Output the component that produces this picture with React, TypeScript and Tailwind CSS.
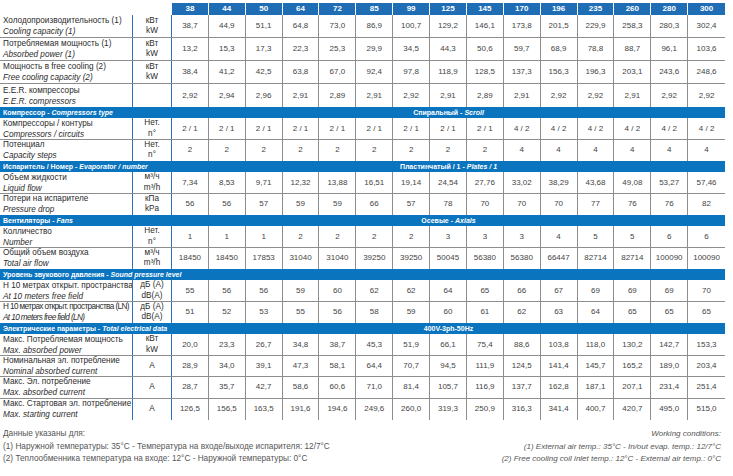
const COLS = ['38', '44', '50', '64', '72', '85', '99', '125', '145', '170', '196', '235', '260', '280', '300'];

type DataRow = {
  kind: 'row';
  ru: string;
  en: string;
  unit: [string, string] | [string] | [];
  values: string[];
  tall?: boolean;
  tight?: boolean;
};

type SectionRow = {
  kind: 'section';
  ru: string;
  en: string;
  value?: [string, string] | [string];
};

type Row = DataRow | SectionRow;

const KW: [string, string] = ['кВт', 'kW'];
const NO: [string, string] = ['Нет.', 'n°'];
const FLOW: [string, string] = ['м³/ч', 'm³/h'];
const DB: [string, string] = ['дБ (A)', 'dB(A)'];

const split = (s: string) => s.split(' ');

const ROWS: Row[] = [
  {
    kind: 'row',
    ru: 'Холодопроизводительность (1)',
    en: 'Cooling capacity (1)',
    unit: KW,
    tall: true,
    values: split('38,7 44,9 51,1 64,8 73,0 86,9 100,7 129,2 146,1 173,8 201,5 229,9 258,3 280,3 302,4'),
  },
  {
    kind: 'row',
    ru: 'Потребляемая мощность (1)',
    en: 'Absorbed power (1)',
    unit: KW,
    tall: true,
    values: split('13,2 15,3 17,3 22,3 25,3 29,9 34,5 44,3 50,6 59,7 68,9 78,8 88,7 96,1 103,6'),
  },
  {
    kind: 'row',
    ru: 'Мощность в free cooling (2)',
    en: 'Free cooling capacity (2)',
    unit: KW,
    tall: true,
    values: split('38,4 41,2 42,5 63,8 67,0 92,4 97,8 118,9 128,5 137,3 156,3 196,3 203,1 243,6 248,6'),
  },
  {
    kind: 'row',
    ru: 'E.E.R. компрессоры',
    en: 'E.E.R. compressors',
    unit: [],
    tall: true,
    values: split('2,92 2,94 2,96 2,91 2,89 2,91 2,92 2,91 2,89 2,91 2,92 2,92 2,91 2,92 2,92'),
  },
  { kind: 'section', ru: 'Компрессор', en: 'Compressors type', value: ['Спиральный', 'Scroll'] },
  {
    kind: 'row',
    ru: 'Компрессоры / контуры',
    en: 'Compressors / circuits',
    unit: NO,
    values: [...Array(9).fill('2 / 1'), ...Array(6).fill('4 / 2')],
  },
  {
    kind: 'row',
    ru: 'Потенциал',
    en: 'Capacity steps',
    unit: NO,
    values: [...Array(9).fill('2'), ...Array(6).fill('4')],
  },
  { kind: 'section', ru: 'Испаритель / Номер', en: 'Evaporator / number', value: ['Пластинчатый / 1', 'Plates / 1'] },
  {
    kind: 'row',
    ru: 'Объем жидкости',
    en: 'Liquid flow',
    unit: FLOW,
    values: split('7,34 8,53 9,71 12,32 13,88 16,51 19,14 24,54 27,76 33,02 38,29 43,68 49,08 53,27 57,46'),
  },
  {
    kind: 'row',
    ru: 'Потери на испарителе',
    en: 'Pressure drop',
    unit: ['кПа', 'kPa'],
    values: split('56 56 57 59 59 66 57 78 70 70 70 77 76 76 82'),
  },
  { kind: 'section', ru: 'Вентиляторы', en: 'Fans', value: ['Осевые', 'Axials'] },
  {
    kind: 'row',
    ru: 'Колличество',
    en: 'Number',
    unit: NO,
    values: split('1 1 1 2 2 2 2 3 3 3 4 5 5 6 6'),
  },
  {
    kind: 'row',
    ru: 'Общий объем воздуха',
    en: 'Total air flow',
    unit: FLOW,
    values: split('18450 18450 17853 31040 31040 39250 39250 50045 56380 56380 66447 82714 82714 100090 100090'),
  },
  { kind: 'section', ru: 'Уровень звукового давления', en: 'Sound pressure level' },
  {
    kind: 'row',
    ru: 'Н 10 метрах открыт. пространства',
    en: 'At 10 meters free field',
    unit: DB,
    values: split('55 56 56 59 60 62 62 64 65 66 67 69 69 69 70'),
  },
  {
    kind: 'row',
    ru: 'Н 10 метрах открыт. пространства (LN)',
    en: 'At 10 meters free field (LN)',
    unit: DB,
    tight: true,
    values: split('51 52 53 55 56 58 59 60 61 62 63 64 65 65 65'),
  },
  { kind: 'section', ru: 'Электрические параметры', en: 'Total electrical data', value: ['400V-3ph-50Hz'] },
  {
    kind: 'row',
    ru: 'Макс. Потребляемая мощность',
    en: 'Max. absorbed power',
    unit: KW,
    values: split('20,0 23,3 26,7 34,8 38,7 45,3 51,9 66,1 75,4 88,6 103,8 118,0 130,2 142,7 153,3'),
  },
  {
    kind: 'row',
    ru: 'Номинальная эл. потребление',
    en: 'Nominal absorbed current',
    unit: ['A'],
    values: split('28,9 34,0 39,1 47,3 58,1 64,4 70,7 94,5 111,9 124,5 141,4 145,7 165,2 189,0 203,4'),
  },
  {
    kind: 'row',
    ru: 'Макс. Эл. потребление',
    en: 'Max. absorbed current',
    unit: ['A'],
    values: split('28,7 35,7 42,7 58,6 60,6 71,0 81,4 105,7 116,9 137,7 162,8 187,1 207,1 231,4 251,4'),
  },
  {
    kind: 'row',
    ru: 'Макс. Стартовая эл. потребление',
    en: 'Max. starting current',
    unit: ['A'],
    values: split('126,5 156,5 163,5 191,6 194,6 249,6 260,0 319,3 250,9 316,3 341,4 400,7 420,7 495,0 515,0'),
  },
];

const GRID = 'grid grid-cols-[133px_39px_repeat(15,minmax(0,1fr))]';

function Section({ row }: { row: SectionRow }) {
  return (
    <div className={`${GRID} h-[11px] items-center bg-[#0a74bf] text-[7px] font-bold leading-none text-white`}>
      <div className="col-span-2 whitespace-nowrap pl-[3px]">
        {row.ru} - <span className="italic">{row.en}</span>
      </div>
      <div className="col-span-15 text-center whitespace-nowrap">
        {row.value && (
          <>
            {row.value[0]}
            {row.value[1] && (
              <>
                {' - '}
                <span className="italic">{row.value[1]}</span>
              </>
            )}
          </>
        )}
      </div>
    </div>
  );
}

function Line({ row, border }: { row: DataRow; border: boolean }) {
  return (
    <div
      className={`${GRID} ${row.tall ? 'h-[23px]' : 'h-[21.5px]'} ${border ? 'border-b border-[#8d8d8d]' : ''}`}
    >
      <div
        className={`flex flex-col justify-center overflow-hidden whitespace-nowrap border-r border-[#2a74bb] pl-[3px] text-[8.2px] leading-[11px] text-[#2b2b2b] ${row.tight ? 'tracking-[-0.6px]' : ''}`}
      >
        <span>{row.ru}</span>
        <span className="italic">{row.en}</span>
      </div>
      <div className="flex flex-col items-center justify-center border-r border-[#2a74bb] text-[8.2px] leading-[10.5px] text-[#2b2b2b]">
        {row.unit.map((u) => (
          <span key={u}>{u}</span>
        ))}
      </div>
      {row.values.map((v, i) => (
        <div
          key={i}
          className={`flex items-center justify-center text-[8px] text-[#444] ${i < 14 ? 'border-r border-[#8d8d8d]' : ''}`}
        >
          {v}
        </div>
      ))}
    </div>
  );
}

export default function App() {
  return (
    <div className="h-[476px] w-[733px] bg-white pt-[3px] font-['Liberation_Sans',Arial,sans-serif]">
      <div className="w-[725px]">
        {/* Model header */}
        <div className={`${GRID} h-[12px]`}>
          <div className="col-span-2" />
          {COLS.map((c, i) => (
            <div
              key={c}
              className={`flex items-center justify-center bg-[#1e6db5] text-[8px] font-bold leading-none text-white ${i < 14 ? 'border-r border-white' : ''}`}
            >
              {c}
            </div>
          ))}
        </div>

        {ROWS.map((row, i) => {
          if (row.kind === 'section') return <Section key={i} row={row} />;
          const next = ROWS[i + 1];
          return <Line key={i} row={row} border={!!next && next.kind === 'row'} />;
        })}
      </div>

      {/* Working conditions */}
      <div className="mt-[8px] flex w-[725px] justify-between leading-[12.5px] text-[#555]">
        <div className="pl-[3px] text-[8.25px]">
          <div>Данные указаны для:</div>
          <div>(1) Наружной температуры: 35°C - Температура на входе/выходе испарителя: 12/7°C</div>
          <div>(2) Теплообменника температура на входе: 12°C - Наружной температуры: 0°C</div>
        </div>
        <div className="pr-[4px] text-right text-[8px] italic">
          <div>Working conditions:</div>
          <div>(1) External air temp.: 35°C - In/out evap. temp.: 12/7°C</div>
          <div>(2) Free cooling coil inlet temp.: 12°C - External air temp.: 0°C</div>
        </div>
      </div>
    </div>
  );
}
